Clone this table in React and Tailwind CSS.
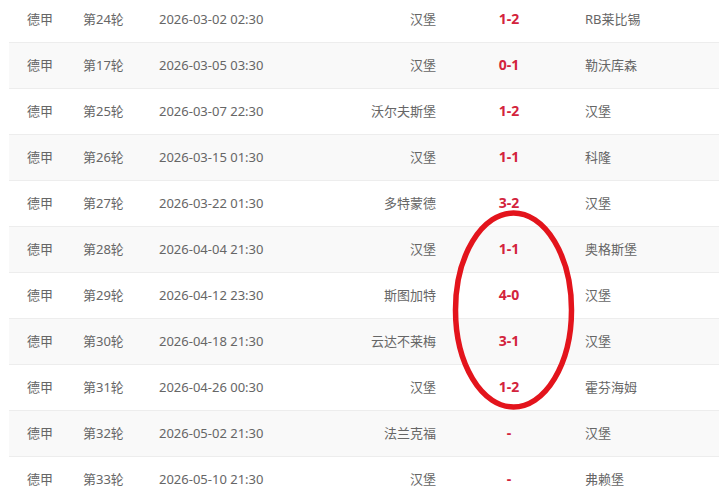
const matches = [
  { round: "第24轮", time: "2026-03-02 02:30", home: "汉堡", score: "1-2", away: "RB莱比锡" },
  { round: "第17轮", time: "2026-03-05 03:30", home: "汉堡", score: "0-1", away: "勒沃库森" },
  { round: "第25轮", time: "2026-03-07 22:30", home: "沃尔夫斯堡", score: "1-2", away: "汉堡" },
  { round: "第26轮", time: "2026-03-15 01:30", home: "汉堡", score: "1-1", away: "科隆" },
  { round: "第27轮", time: "2026-03-22 01:30", home: "多特蒙德", score: "3-2", away: "汉堡" },
  { round: "第28轮", time: "2026-04-04 21:30", home: "汉堡", score: "1-1", away: "奥格斯堡" },
  { round: "第29轮", time: "2026-04-12 23:30", home: "斯图加特", score: "4-0", away: "汉堡" },
  { round: "第30轮", time: "2026-04-18 21:30", home: "云达不莱梅", score: "3-1", away: "汉堡" },
  { round: "第31轮", time: "2026-04-26 00:30", home: "汉堡", score: "1-2", away: "霍芬海姆" },
  { round: "第32轮", time: "2026-05-02 21:30", home: "法兰克福", score: "-", away: "汉堡" },
  { round: "第33轮", time: "2026-05-10 21:30", home: "汉堡", score: "-", away: "弗赖堡" },
];

export default function App() {
  return (
    <div className="relative w-[719px] h-[501px] overflow-hidden bg-white text-[13px] text-[#666] font-['Noto_Sans','Noto_Sans_CJK_SC',sans-serif]">
      <div className="ml-[9px] -mt-[3px]">
        {matches.map((m, i) => (
          <div
            key={i}
            className={`flex items-center h-[46px] border-b border-[#ededed] ${i % 2 === 1 ? "bg-[#f9f9f9]" : "bg-white"}`}
          >
            <div className="w-[74px] pl-[18px]">德甲</div>
            <div className="w-[76px]">{m.round}</div>
            <div className="w-[160px]">{m.time}</div>
            <div className="w-[117px] text-right">{m.home}</div>
            <div className="w-[146px] text-center text-[14px] font-bold text-[#d3243c] -mt-[2px]">{m.score}</div>
            <div className="pl-[3px]">{m.away}</div>
          </div>
        ))}
      </div>
      <svg className="absolute left-[450px] top-[207px]" width="128" height="206" viewBox="0 0 128 206">
        <ellipse cx="63.5" cy="103" rx="58" ry="97" fill="none" stroke="#e3141c" strokeWidth="5.5" />
      </svg>
    </div>
  );
}
